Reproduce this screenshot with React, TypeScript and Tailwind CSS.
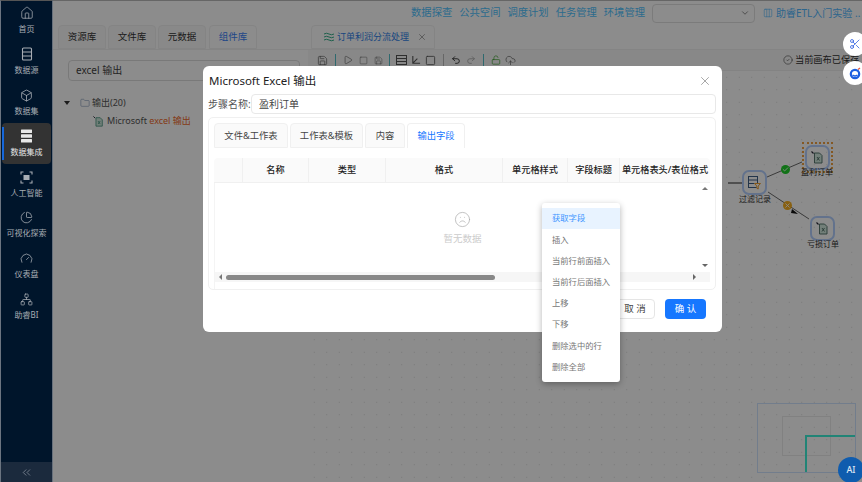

import React from "react";
import { X, ChevronDown, ChevronsLeft, Home, Box, ChartPie, Gauge, Network, Folder, Square, Play, Save, Undo2, Redo2, LockOpen, CloudUpload, CircleCheck, Scissors, Frown, Columns3, Check } from "lucide-react";

const font = { fontFamily: '"Noto Sans","Noto Sans CJK SC",sans-serif' };

function RowsIcon() {
  return (
    <svg width="12" height="14" viewBox="0 0 12 14" fill="none" stroke="currentColor" strokeWidth="1.1">
      <rect x="1.500" y="1" width="9" height="12" rx="1" />
      <path d="M1.500 5h9M1.500 9h9" />
    </svg>
  );
}
function GridIcon() {
  return (
    <svg width="11" height="10" viewBox="0 0 11 10" fill="none" stroke="currentColor" strokeWidth="1">
      <rect x="0.500" y="0.500" width="10" height="9" />
      <path d="M0.500 3.500h10M0.500 6.500h10" />
    </svg>
  );
}
function StackIcon() {
  return (
    <svg width="13" height="14" viewBox="0 0 13 14" fill="currentColor">
      <rect x="1" y="0.500" width="11" height="3.600" rx="0.500" />
      <rect x="1" y="5.200" width="11" height="3.600" rx="0.500" />
      <rect x="1" y="9.900" width="11" height="3.600" rx="0.500" />
    </svg>
  );
}
function AiIcon() {
  return (
    <svg width="13" height="13" viewBox="0 0 13 13" fill="none" stroke="currentColor" strokeWidth="1.1">
      <path d="M1 3.500V1h2.500M9.500 1H12v2.500M1 9.500V12h2.500M9.500 12H12V9.500" />
      <rect x="3.500" y="4" width="6" height="5" fill="currentColor" stroke="none" />
    </svg>
  );
}
function FileGlyph({ size = 13, color = "#4b6b62" }: { size?: number; color?: string }) {
  return (
    <svg width={size} height={size} viewBox="0 0 13 13" fill="none" stroke={color} strokeWidth="0.9">
      <path d="M0.500 0.500l2 2" strokeWidth="1.100" stroke="#223" />
      <path d="M3.500 2h5l2.500 2.500V12h-7.500z" fill="#cfe8dc" />
      <path d="M6 6l2.500 3.500M8.500 6L6 9.500" />
    </svg>
  );
}
function FilterGlyph() {
  return (
    <svg width="15" height="15" viewBox="0 0 15 15" fill="none" stroke="#3f5f88" strokeWidth="1">
      <rect x="1.500" y="1.500" width="9" height="11" />
      <path d="M1.500 5h9M1.500 8.500h6" />
      <path d="M7.500 8.500h6l-2.300 2.500v3l-1.400-0.800v-2.200z" stroke="#f0a030" fill="#fff" />
    </svg>
  );
}

const side = [
  { l: "首页", i: <Home size={14} strokeWidth={1.3} /> },
  { l: "数据源", i: <RowsIcon /> },
  { l: "数据集", i: <Box size={13} strokeWidth={1.5} /> },
  { l: "数据集成", i: <StackIcon />, active: true },
  { l: "人工智能", i: <AiIcon /> },
  { l: "可视化探索", i: <ChartPie size={13} strokeWidth={1.4} /> },
  { l: "仪表盘", i: <Gauge size={13} strokeWidth={1.4} /> },
  { l: "助睿BI", i: <Network size={13} strokeWidth={1.4} /> },
];

function NodeBox({ children }: { children: React.ReactNode }) {
  return <div className="w-[25px] h-[25px] rounded-[7px] border-2 border-[#b4d0ff] flex items-center justify-center">{children}</div>;
}
function Sep() {
  return <span className="w-px h-[12px] bg-[#55c0c8] shrink-0" />;
}

export default function App() {
  const menu = ["获取字段", "插入", "当前行前面插入", "当前行后面插入", "上移", "下移", "删除选中的行", "删除全部"];
  const cols = [
    { t: "", w: "w-[29px]" },
    { t: "名称", w: "w-[66px]" },
    { t: "类型", w: "w-[77px]" },
    { t: "格式", w: "w-[117px]" },
    { t: "单元格样式", w: "w-[65px]" },
    { t: "字段标题", w: "w-[52px]" },
    { t: "单元格表头/表位格式", w: "w-[90px]" },
  ];
  return (
    <div style={font} className="w-[862px] h-[482px] flex overflow-hidden relative bg-white">
      {/* sidebar */}
      <aside className="w-[53px] h-full shrink-0 flex flex-col bg-[#00152b] border-l border-l-[#6b7480] border-r border-r-[#67707c] border-t border-t-[#555] relative z-20">
        <div className="flex-1 flex flex-col -mt-[1px]">
          {side.map((s) => (
            <div key={s.l} className={`h-[40.900px] mx-[1px] rounded-[4px] flex flex-col items-center justify-center gap-[3px] relative ${s.active ? "bg-[#333333] text-[#e8e8e8]" : "text-[#a8adb4]"}`}>
              {s.active && <div className="absolute left-0 top-[4px] bottom-[4px] w-[2px] bg-[#1668dc]" />}
              {s.i}
              <span className="text-[8px] leading-[11px] whitespace-nowrap">{s.l}</span>
            </div>
          ))}
        </div>
        <div className="h-[20px] bg-[#1b2a3d] flex items-center justify-center text-[#9aa3ae]">
          <ChevronsLeft size={13} strokeWidth={1.2} />
        </div>
      </aside>

      {/* main */}
      <main className="flex-1 flex flex-col min-w-0 bg-white">
        <header className="h-[25px] shrink-0 flex items-center justify-end border-t border-[#bbb]">
          <nav className="flex gap-[7px] text-[10.300px] text-[#50c4ff] mr-[7px] whitespace-nowrap">
            <span>数据探查</span><span>公共空间</span><span>调度计划</span><span>任务管理</span><span>环境管理</span>
          </nav>
          <div className="w-[103px] h-[19px] border border-[#e0e0e0] rounded-[4px] flex items-center justify-end pr-[4px] text-[#777]"><ChevronDown size={10} /></div>
          <div className="w-[107px] flex items-center gap-[3px] pl-[8px] text-[10px] text-[#50b8ff] whitespace-nowrap overflow-hidden">
            <Columns3 size={10} strokeWidth={1.4} className="shrink-0" />
            <span>助睿ETL入门实验 ..</span>
          </div>
        </header>
        <div className="flex-1 flex min-h-0">
          {/* left panel */}
          <section className="w-[255px] shrink-0 flex flex-col">
            <div className="h-[25px] flex gap-[2px] pl-[5px] border-b border-[#f0f0f0] text-[9.500px]">
              {["资源库", "文件库", "元数据"].map((t) => (
                <div key={t} className="w-[48px] bg-[#fafafa] border border-[#f0f0f0] rounded-t-[4px] flex items-center justify-center text-[#333]">{t}</div>
              ))}
              <div className="ml-[1px] w-[48px] bg-white border border-[#f0f0f0] rounded-t-[4px] flex items-center justify-center text-[#3b82f6]">组件库</div>
            </div>
            <div className="ml-[15px] mt-[10px] w-[232px] h-[21px] border border-[#ddd] rounded-[4px] flex items-center pl-[7px] text-[10px] text-[#444]">excel 输出</div>
            <div className="ml-[11px] mt-[14px] text-[9px] text-[#555]">
              <div className="flex items-center h-[16px]">
                <span className="w-0 h-0 border-x-[3px] border-x-transparent border-t-[4px] border-t-[#333] mr-[10px]" />
                <Folder size={10} strokeWidth={1.2} className="text-[#6b82a8] mr-[2px]" />
                <span>输出(20)</span>
              </div>
              <div className="flex items-center h-[18px] pl-[29px] mt-[1px]">
                <FileGlyph size={11} color="#3f8f78" />
                <span className="ml-[3px] whitespace-nowrap">Microsoft <span className="text-[#f06a2a]">excel 输出</span></span>
              </div>
            </div>
          </section>

          {/* right panel */}
          <section className="flex-1 flex flex-col min-w-0">
            <div className="h-[25px] shrink-0 pl-[3px] border-b border-[#f0f0f0]">
              <div className="w-[124px] h-full border border-[#f0f0f0] rounded-t-[4px] flex items-center pl-[11px] text-[9px] text-[#2f7fe8] whitespace-nowrap">
                <svg width="12" height="10" viewBox="0 0 12 10" className="shrink-0" fill="none" stroke="#35b08a" strokeWidth="1"><path d="M1 2q2.500-1.500 5 0t5 0M1 5q2.500-1.500 5 0t5 0M1 8q2.500-1.500 5 0t5 0" /></svg>
                <span className="ml-[2px]">订单利润分流处理</span>
                <X size={10} className="ml-[8px] text-[#999]" />
              </div>
            </div>
            <div className="h-[20px] shrink-0 flex items-center pl-[9px] text-[#555] bg-[#f8f8f8]">
              <Save size={11} strokeWidth={1.4} />
              <span className="mx-[7px] flex"><Sep /></span>
              <Play size={10} strokeWidth={1.4} />
              <Square size={9} strokeWidth={1.2} className="ml-[6px]" />
              <Save size={9} strokeWidth={1.2} className="ml-[6px]" />
              <span className="mx-[6px] flex"><Sep /></span>
              <GridIcon />
              <svg width="10" height="10" viewBox="0 0 11 11" className="ml-[4px]" fill="none" stroke="currentColor" strokeWidth="1.2"><path d="M2 1v8h8M2 9l5-5" /></svg>
              <Square size={11} strokeWidth={1.8} className="ml-[4px]" />
              <span className="mx-[7px] w-px h-[12px] bg-[#bbb]" />
              <Undo2 size={10} strokeWidth={2} className="text-[#222]" />
              <Redo2 size={10} strokeWidth={2} className="ml-[5px] text-[#aaa]" />
              <span className="mx-[7px] flex"><Sep /></span>
              <LockOpen size={10} strokeWidth={1.6} className="text-[#3aa02a]" />
              <CloudUpload size={11} strokeWidth={1.4} className="ml-[4px]" />
              <div className="ml-auto flex items-center gap-[2px] text-[9.200px] text-[#333] whitespace-nowrap w-[79px] shrink-0">
                <CircleCheck size={10} strokeWidth={1.3} className="shrink-0" />
                <span>当前画布已保存</span>
              </div>
            </div>
            <div className="flex-1 relative bg-[radial-gradient(#d8d8d8_0.6px,transparent_0.7px)] bg-[length:12.500px_12.500px] bg-white border-t border-[#eee]">
              <svg className="absolute inset-0 w-full h-full" fill="none">
                <path d="M434 112H420" stroke="#222" strokeWidth="1" />
                <path d="M459 106L494 91M460 121L501 148" stroke="#444" strokeWidth="0.8" />
                <path d="M484 138l6 5-7-1z" fill="#111" />
              </svg>
              <div className="absolute left-[434px] top-[99px] bg-white rounded-[7px]"><NodeBox><FilterGlyph /></NodeBox></div>
              <span className="absolute left-[431px] top-[122px] text-[8px] text-[#333] whitespace-nowrap">过滤记录</span>
              <div className="absolute left-[494px] top-[71px] border-2 border-dotted border-[#f0a040] p-[1px]"><NodeBox><FileGlyph /></NodeBox></div>
              <span className="absolute left-[493px] top-[95px] text-[8px] text-[#333] whitespace-nowrap">盈利订单</span>
              <div className="absolute left-[502px] top-[145px]"><NodeBox><FileGlyph /></NodeBox></div>
              <span className="absolute left-[499px] top-[167px] text-[8px] text-[#333] whitespace-nowrap">亏损订单</span>
              <div className="absolute left-[473px] top-[94px] w-[9px] h-[9px] rounded-full bg-[#1fd02a] flex items-center justify-center text-white"><Check size={7} strokeWidth={3} /></div>
              <div className="absolute left-[475px] top-[130px] w-[9px] h-[9px] rounded-full bg-[#f8b020] flex items-center justify-center text-white"><X size={7} strokeWidth={3} /></div>
              {/* minimap */}
              <div className="absolute left-[449px] top-[332px] w-[99px] h-[70px] border border-[#d0e4ff]">
                <div className="absolute left-[24px] top-[12px] w-[49px] h-[40px] border border-[#ececec]" />
                <div className="absolute left-[48px] top-[31px] right-0 h-[1.500px] bg-[#3cf0d8]" />
                <div className="absolute left-[47px] top-[31px] bottom-0 w-[1.500px] bg-[#3cf0d8]" />
              </div>
            </div>
          </section>
        </div>
      </main>

      {/* mask */}
      <div className="absolute inset-0 left-[53px] bg-black/45 z-10" />

      {/* floating */}
      <div className="absolute left-[843px] top-[32px] w-[24px] h-[24px] rounded-full bg-white flex items-center justify-center text-[#2f5fe0] z-30">
        <Scissors size={12} strokeWidth={1.6} />
      </div>
      <div className="absolute left-[843px] top-[61px] w-[24px] h-[24px] rounded-full bg-white flex items-center justify-center z-30">
        <svg width="13" height="13" viewBox="0 0 13 13" fill="none">
          <circle cx="6" cy="7" r="4.200" stroke="#1d5fe0" strokeWidth="2.200" />
          <path d="M3.500 8q2.500 2 5 0" stroke="#1d5fe0" strokeWidth="1.500" />
          <path d="M9 2.500l2-1.500" stroke="#e0503a" strokeWidth="1.200" />
        </svg>
      </div>
      <div className="absolute left-[838px] top-[457px] w-[26px] h-[26px] rounded-full bg-[#0f5cae] flex items-center justify-center text-[9px] text-[#dfe8f2] z-30 font-medium">AI</div>

      {/* modal */}
      <div className="absolute left-[203px] top-[66px] w-[519px] h-[266px] bg-white rounded-[6px] z-40 flex flex-col px-[5px] pt-[6px]">
        <div className="flex items-center justify-between h-[17px] pl-[1px] pr-[5px]">
          <span className="text-[11.500px] text-[#222] whitespace-nowrap">Microsoft Excel 输出</span>
          <X size={14} strokeWidth={1.1} className="text-[#777]" />
        </div>
        <div className="flex items-center mt-[5px] h-[20px] pr-[1px]">
          <span className="text-[10px] text-[#555] w-[43px] shrink-0 whitespace-nowrap">步骤名称:</span>
          <div className="flex-1 h-full border border-[#e8e8e8] rounded-[4px] flex items-center pl-[7px] text-[10px] text-[#444]">盈利订单</div>
        </div>
        <div className="mt-[3px] h-[173px] mr-[1px] border border-[#f0f0f0] rounded-[5px] flex flex-col pl-[5px] pr-[5px] pt-[5px]">
          <div className="h-[25px] shrink-0 flex gap-[2px] text-[9.300px] text-[#444]">
            <div className="w-[74px] bg-[#fafafa] border border-[#f0f0f0] rounded-t-[4px] flex items-center justify-center">文件&amp;工作表</div>
            <div className="w-[73px] bg-[#fafafa] border border-[#f0f0f0] rounded-t-[4px] flex items-center justify-center">工作表&amp;模板</div>
            <div className="w-[40px] bg-[#fafafa] border border-[#f0f0f0] rounded-t-[4px] flex items-center justify-center">内容</div>
            <div className="w-[58px] border border-[#f0f0f0] border-b-0 rounded-t-[4px] flex items-center justify-center text-[#1677ff]">输出字段</div>
          </div>
          <div className="mt-[10px] flex-1 flex flex-col w-[496px]">
            <div className="h-[25px] shrink-0 flex bg-[#fafafa] border-b border-[#f0f0f0] rounded-t-[4px] text-[9.200px] font-medium text-[#222]">
              {cols.map((c, i) => (
                <div key={i} className={`${c.w} shrink-0 flex items-center justify-center whitespace-nowrap overflow-hidden ${i < 6 ? "border-r border-[#f0f0f0]" : ""}`}>{c.t}</div>
              ))}
            </div>
            <div className="flex-1 relative border-l border-[#f4f4f4]">
              <div className="h-[89px] flex flex-col items-center justify-center gap-[5px]">
                <Frown size={17} strokeWidth={1} className="text-[#aaa]" />
                <span className="text-[9.500px] leading-[11px] text-[#ccc]">暂无数据</span>
              </div>
              <div className="h-[10px] bg-[#f6f6f6] flex items-center pl-[4px] pr-[14px]">
                <span className="w-0 h-0 border-y-[3px] border-y-transparent border-r-[3px] border-r-[#777]" />
                <div className="ml-[4px] w-[269px] h-[5px] rounded-full bg-[#888]" />
                <span className="ml-auto w-0 h-0 border-y-[3px] border-y-transparent border-l-[3px] border-l-[#666]" />
              </div>
              <span className="absolute right-[2px] top-[4px] w-0 h-0 border-x-[3px] border-x-transparent border-b-[3px] border-b-[#777]" />
              <span className="absolute right-[2px] top-[81px] w-0 h-0 border-x-[3px] border-x-transparent border-t-[3px] border-t-[#666]" />
            </div>
          </div>
        </div>
        <div className="flex justify-end items-center mt-[9px] pr-[11px] gap-[10px]">
          <div className="w-[40px] h-[20px] border border-[#e5e5e5] rounded-[4px] flex items-center justify-center text-[9.500px] text-[#444]">取 消</div>
          <div className="w-[41px] h-[20px] bg-[#1677ff] rounded-[4px] flex items-center justify-center text-[9.500px] text-white">确 认</div>
        </div>
      </div>

      {/* context menu */}
      <div className="absolute left-[542px] top-[203px] w-[78px] h-[179px] bg-white rounded-[3px] shadow-[0_2px_6px_rgba(0,0,0,0.3)] z-50 pt-[5px] text-[8.300px] text-[#777]">
        {menu.map((m, i) => (
          <div key={m} className={`h-[21.200px] flex items-center pl-[10px] whitespace-nowrap ${i === 0 ? "bg-[#e8f3ff] text-[#4096ff]" : ""}`}>{m}</div>
        ))}
      </div>
    </div>
  );
}
